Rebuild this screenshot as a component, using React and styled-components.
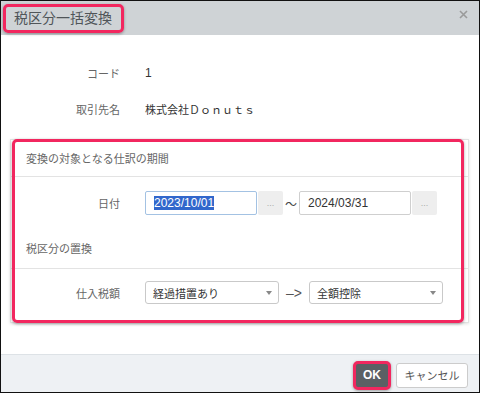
import React from 'react';
import styled, { createGlobalStyle } from 'styled-components';

const GlobalStyle = createGlobalStyle`
  body {
    margin: 0;
    background: #fff;
    font-family: "Liberation Sans", "Noto Sans CJK JP", sans-serif;
  }
`;

const Frame = styled.div`
  width: 480px;
  height: 393px;
  box-sizing: border-box;
  border: 1px solid #111;
  display: flex;
  flex-direction: column;
  background: #fff;
  color: #555;
`;

const Header = styled.div`
  flex: none;
  height: 34px;
  background: #cfd3d6;
  display: flex;
  align-items: center;
  justify-content: space-between;
  padding: 0 11px 0 2px;
`;

/* red annotation ring */
const ring = `
  border: 3px solid #f2275f;
  border-radius: 5px;
  box-shadow: 0 1px 3px rgba(0, 0, 0, 0.35);
`;

const Title = styled.div`
  ${ring}
  padding: 0 9px 0 8px;
  font-size: 14px;
  line-height: 23px;
  color: #505559;
`;

const Close = styled.button`
  align-self: flex-start;
  margin-top: 9px;
  width: 9px;
  height: 9px;
  padding: 0;
  border: none;
  background: none;
  display: flex;
`;

const Body = styled.div`
  flex: 1;
  padding-top: 20px;
  display: flex;
  flex-direction: column;
`;

const InfoRow = styled.div`
  display: grid;
  grid-template-columns: ${p => p.labelWidth}px 1fr;
  column-gap: 25px;
  align-items: center;
  height: ${p => p.height || 36}px;
  margin-top: ${p => p.top || 0}px;
`;

const Label = styled.div`
  text-align: right;
  font-size: 11px;
  color: #666;
`;

const Value = styled.div`
  font-size: ${p => p.size || 11}px;
  color: #333;
`;

const Panel = styled.div`
  position: relative;
  margin: 12px 10px 0 9px;
  padding-bottom: 18px;
  border: 1px solid #e2e2e2;
  box-shadow: 0 1px 3px rgba(0, 0, 0, 0.12);
`;

const PanelRing = styled.div`
  ${ring}
  position: absolute;
  top: -1px;
  bottom: -1px;
  left: 1px;
  right: 4px;
  pointer-events: none;
`;

const SectionTitle = styled.div`
  margin-top: ${p => p.top || 0}px;
  padding: ${p => p.top ? 0 : 13}px 15px ${p => p.top ? 12 : 10}px;
  line-height: 13px;
  font-size: 11px;
  color: #666;
  border-bottom: 1px solid #e3e3e3;
`;

const Fields = styled.div`
  display: flex;
  align-items: center;
`;

const DateField = styled.div`
  width: 112px;
  height: 24px;
  box-sizing: border-box;
  border: 1px solid ${p => p.focused ? '#a3c2e3' : '#cfcfcf'};
  border-radius: 2px;
  padding: 0 8px;
  display: flex;
  align-items: center;
  font-size: 12px;
  color: #333;
`;

const Selected = styled.span`
  background: #3167cc;
  color: #fff;
  line-height: 14px;
`;

const PickerButton = styled.button`
  width: 25px;
  height: 24px;
  margin-left: 1px;
  padding: 0;
  border: none;
  border-radius: 2px;
  background: #eee;
  color: #aaa;
  font-size: 9px;
  font-family: inherit;
`;

const Tilde = styled.span`
  width: 16px;
  text-align: center;
  font-size: 12px;
  color: #444;
`;

const SelectBox = styled.div`
  width: 134px;
  height: 23px;
  box-sizing: border-box;
  border: 1px solid #c9c9c9;
  border-radius: 3px;
  padding: 0 6px 0 7px;
  display: flex;
  align-items: center;
  justify-content: space-between;
  font-size: 11px;
  color: #333;
`;

const Arrow = styled.span`
  width: 30px;
  text-align: center;
  font-size: 14px;
  color: #555;
`;

const Footer = styled.div`
  flex: none;
  height: 38px;
  box-sizing: border-box;
  border-top: 1px solid #dde2e6;
  background: #eef1f4;
  display: flex;
  justify-content: flex-end;
  align-items: center;
  gap: 5px;
  padding: 3px 11px 0 0;
`;

const OkButton = styled.button`
  ${ring}
  width: 38px;
  height: 29px;
  padding: 0;
  background: #5b6064;
  color: #fff;
  font-family: inherit;
  font-weight: bold;
  font-size: 12px;
`;

const CancelButton = styled.button`
  width: 72px;
  height: 25px;
  padding: 0;
  border: 1px solid #ccc;
  border-radius: 3px;
  background: #fff;
  color: #555;
  font-family: inherit;
  font-size: 11px;
`;

const Caret = () => (
  <svg width="6" height="4" viewBox="0 0 6 4">
    <path d="M0 0h6L3 4z" fill="#888" />
  </svg>
);

const Select = ({ value }) => (
  <SelectBox>
    {value}
    <Caret />
  </SelectBox>
);

export default function App() {
  return (
    <>
      <GlobalStyle />
      <Frame>
        <Header>
          <Title>税区分一括変換</Title>
          <Close aria-label="close">
            <svg width="9" height="9" viewBox="0 0 9 9">
              <path d="M1 1l7 7M8 1L1 8" stroke="#9a9a9a" strokeWidth="1.6" />
            </svg>
          </Close>
        </Header>

        <Body>
          <InfoRow labelWidth={119}>
            <Label>コード</Label>
            <Value size={12}>1</Value>
          </InfoRow>
          <InfoRow labelWidth={119}>
            <Label>取引先名</Label>
            <Value>株式会社Ｄｏｎｕｔｓ</Value>
          </InfoRow>

          <Panel>
            <PanelRing />
            <SectionTitle>変換の対象となる仕訳の期間</SectionTitle>
            <InfoRow labelWidth={109} height={24} top={14}>
              <Label>日付</Label>
              <Fields>
                <DateField focused>
                  <Selected>2023/10/01</Selected>
                </DateField>
                <PickerButton>...</PickerButton>
                <Tilde>〜</Tilde>
                <DateField>2024/03/31</DateField>
                <PickerButton>...</PickerButton>
              </Fields>
            </InfoRow>

            <SectionTitle top={28}>税区分の置換</SectionTitle>
            <InfoRow labelWidth={109} height={23} top={12}>
              <Label>仕入税額</Label>
              <Fields>
                <Select value="経過措置あり" />
                <Arrow>–&gt;</Arrow>
                <Select value="全額控除" />
              </Fields>
            </InfoRow>
          </Panel>
        </Body>

        <Footer>
          <OkButton>OK</OkButton>
          <CancelButton>キャンセル</CancelButton>
        </Footer>
      </Frame>
    </>
  );
}
